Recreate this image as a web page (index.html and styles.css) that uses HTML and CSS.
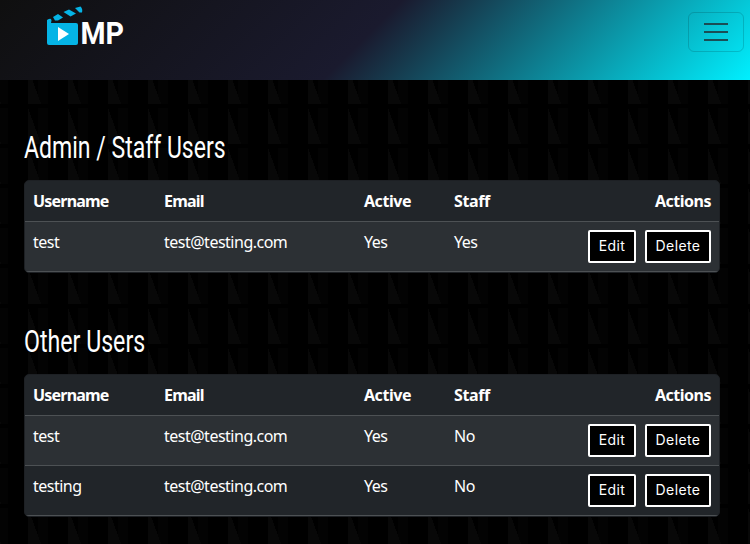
FILE: index.html
```html
<!DOCTYPE html>
<html lang="en">
<head>
<meta charset="utf-8">
<title>MP Users</title>
<link rel="stylesheet" href="styles.css">
</head>
<body>
<nav class="navbar">
  <a class="brand">
    <svg width="80" height="50" viewBox="0 0 80 50">
      <g fill="#05b4e6">
        <path d="M0 14Q3 12 4 13Q5 14 4 17H29Q31 17 31 19V37Q31 39 29 39H2Q0 39 0 37Z"/>
        <path d="M6 11L11 8L16 11.500L11 14.500L8 14.500Z"/>
        <path d="M16.500 6L22 3.500L29 7.500L23.500 10.500Z"/>
        <path d="M28 2L33.500 .5Q36 3 35 6.500L32.500 6.500Z"/>
      </g>
      <path fill="#fff" d="M11 21L22 28L11 35Z"/>
      <text class="brand-text" x="33.500" y="37.500" textLength="43.500" lengthAdjust="spacingAndGlyphs">MP</text>
    </svg>
  </a>
  <button class="toggler" aria-label="Menu">
    <svg width="30" height="30" viewBox="0 0 30 30"><path d="M3 7h24M3 15h24M3 23h24" stroke="#212529" stroke-opacity=".75" stroke-width="2"/></svg>
  </button>
</nav>
<main class="content">
  <section class="group">
    <h2><span class="staff-title">Admin / Staff Users</span></h2>
    <div class="table-wrap">
      <table>
        <thead><tr><th class="name">Username</th><th class="email">Email</th><th class="active">Active</th><th class="staff">Staff</th><th class="actions">Actions</th></tr></thead>
        <tbody>
          <tr><td>test</td><td>test@testing.com</td><td>Yes</td><td>Yes</td><td><div class="buttons"><button class="btn edit">Edit</button><button class="btn delete">Delete</button></div></td></tr>
        </tbody>
      </table>
    </div>
  </section>
  <section class="group">
    <h2><span class="other-title">Other Users</span></h2>
    <div class="table-wrap">
      <table>
        <thead><tr><th class="name">Username</th><th class="email">Email</th><th class="active">Active</th><th class="staff">Staff</th><th class="actions">Actions</th></tr></thead>
        <tbody>
          <tr><td>test</td><td>test@testing.com</td><td>Yes</td><td>No</td><td><div class="buttons"><button class="btn edit">Edit</button><button class="btn delete">Delete</button></div></td></tr>
          <tr><td>testing</td><td>test@testing.com</td><td>Yes</td><td>No</td><td><div class="buttons"><button class="btn edit">Edit</button><button class="btn delete">Delete</button></div></td></tr>
        </tbody>
      </table>
    </div>
  </section>
</main>
</body>
</html>
```
FILE: styles.css
```css
* { box-sizing: border-box; }
html { height: 100%; overflow: hidden; }
body {
  margin: 0;
  height: 100%;
  overflow: hidden;
  color: #fff;
  font: 16px/24px "Noto Sans", "Open Sans", sans-serif;
  background-color: #000;
  background-image:
    linear-gradient(to bottom, transparent 36px, #000 36px),
    conic-gradient(from 160deg at 0 0, #080808 20deg, transparent 20deg),
    linear-gradient(to right, #000 10px, #030303 10px, #030303 20px, #000 20px);
  background-size: 40px 40px;
  background-position: 28px 28px;
}
.navbar {
  height: 80px;
  padding: 6px 6px 0 47px;
  display: flex;
  justify-content: space-between;
  align-items: flex-start;
  background: linear-gradient(135deg, #0f0f0f 0%, #1a1a2e 48.5%, #00f0ff 100%);
}
.brand svg { display: block; }
.brand-text { font: bold 31px/1 Roboto, sans-serif; fill: #fff; }
.toggler {
  width: 56px;
  height: 40px;
  margin-top: 6px;
  padding: 0;
  display: flex;
  align-items: center;
  justify-content: center;
  border: 1px solid rgba(0, 0, 0, .15);
  border-radius: 6px;
  background: none;
}
.toggler svg { fill: none; }
.content { padding: 48px 30px 0 24px; }
.group { margin-bottom: 49px; }
h2 {
  margin: 0 0 14px;
  height: 38px;
  font: 400 31px/39px Roboto, sans-serif;
  white-space: nowrap;
}
h2 span { display: inline-block; transform-origin: left; }
.staff-title { transform: scaleX(.743); }
.other-title { transform: scaleX(.747); }
.table-wrap {
  border: 1px solid #1d2024;
  border-radius: 5px;
  background: #212529;
  overflow: hidden;
}
table { width: 100%; table-layout: fixed; border-spacing: 0; }
th, td {
  padding: 8px;
  text-align: left;
  vertical-align: top;
  border-bottom: 1px solid #4d5154;
  letter-spacing: -.5px;
}
th { font-weight: 700; letter-spacing: -.8px; }
tbody tr:nth-child(odd) { background: #2c3034; }
.name { width: 131px; }
.email { width: 200px; }
.active { width: 90px; letter-spacing: -.45px; }
.staff { width: 90px; letter-spacing: -.4px; }
.actions { text-align: right; letter-spacing: -.5px; }
.buttons { display: flex; justify-content: flex-end; gap: 9px; }
.btn {
  height: 33px;
  padding: 0;
  border: 2px solid #fff;
  border-radius: 2px;
  background: #000;
  color: #fff;
  font: 400 14px/28px Inter, sans-serif;
  letter-spacing: .4px;
  display: flex;
  justify-content: center;
}
.edit { width: 48px; }
.delete { width: 66px; }
```
